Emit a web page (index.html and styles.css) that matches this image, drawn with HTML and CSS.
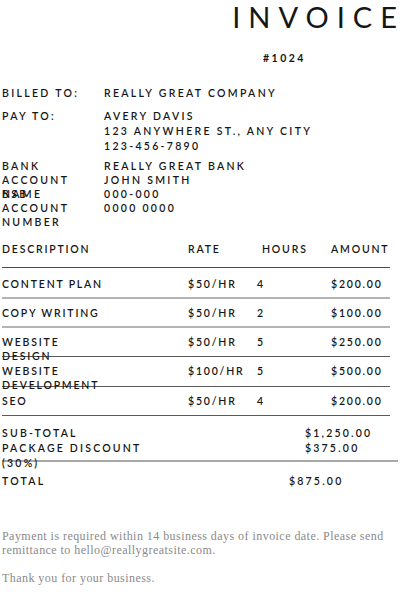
FILE: index.html
```html
<!DOCTYPE html>
<html>
<head>
<meta charset="utf-8">
<link rel="stylesheet" href="styles.css">
</head>
<body>
<div class="page">
  <header class="head">
    <h1 class="title">INVOIC<span class="tail">E</span></h1>
    <div class="number">#1024</div>
  </header>

  <section class="info">
    <div class="row bill">
      <div class="label">BILLED TO:</div>
      <div class="val">REALLY GREAT COMPANY</div>
    </div>
    <div class="row pay">
      <div class="label">PAY TO:</div>
      <div class="val">AVERY DAVIS<br>123 ANYWHERE ST., ANY CITY<br>123-456-7890</div>
    </div>
    <div class="bank">
      <div class="row brow"><div class="label">BANK</div><div class="val">REALLY GREAT BANK</div></div>
      <div class="row brow"><div class="label">ACCOUNT NAME</div><div class="val">JOHN SMITH</div></div>
      <div class="row brow"><div class="label">BSB</div><div class="val">000-000</div></div>
      <div class="row brow"><div class="label">ACCOUNT NUMBER</div><div class="val">0000 0000</div></div>
    </div>
  </section>

  <section class="items">
    <div class="line head-row">
      <div class="c-desc">DESCRIPTION</div>
      <div class="c-rate">RATE</div>
      <div class="c-hours-head">HOURS</div>
      <div class="c-amt">AMOUNT</div>
    </div>
    <div class="rows">
      <div class="line item soft">
        <div class="c-desc"><span class="desc">CONTENT&nbsp;PLAN</span></div>
        <div class="c-rate">$50/HR</div>
        <div class="c-hours">4</div>
        <div class="c-amt">$200.00</div>
      </div>
      <div class="line item soft">
        <div class="c-desc"><span class="desc">COPY&nbsp;WRITING</span></div>
        <div class="c-rate">$50/HR</div>
        <div class="c-hours">2</div>
        <div class="c-amt">$100.00</div>
      </div>
      <div class="line item">
        <div class="c-desc"><span class="desc">WEBSITE DESIGN</span></div>
        <div class="c-rate">$50/HR</div>
        <div class="c-hours">5</div>
        <div class="c-amt">$250.00</div>
      </div>
      <div class="line item">
        <div class="c-desc"><span class="desc">WEBSITE DEVELOPMENT</span></div>
        <div class="c-rate">$100/HR</div>
        <div class="c-hours">5</div>
        <div class="c-amt">$500.00</div>
      </div>
      <div class="line item">
        <div class="c-desc"><span class="desc">SEO</span></div>
        <div class="c-rate">$50/HR</div>
        <div class="c-hours">4</div>
        <div class="c-amt">$200.00</div>
      </div>
    </div>
  </section>

  <section class="totals">
    <div class="trow"><div class="tlabel">SUB-TOTAL</div><div class="tval">$1,250.00</div></div>
    <div class="trow"><div class="tlabel">PACKAGE DISCOUNT (30%)</div><div class="tval">$375.00</div></div>
  </section>
  <div class="grand">
    <div class="tlabel">TOTAL</div><div class="tval">$875.00</div>
  </div>

  <footer class="foot">
    <p>Payment is required within 14 business days of invoice date. Please send remittance to hello@reallygreatsite.com.</p>
    <p>Thank you for your business.</p>
  </footer>
</div>
</body>
</html>
```
FILE: styles.css
```css
* { box-sizing: border-box; }
html, body { margin: 0; padding: 0; background: #fff; }
body {
  font-family: "Lato", "DejaVu Sans", sans-serif;
  font-weight: 600;
  color: #161616;
  width: 400px;
  height: 609px;
  overflow: hidden;
}
.page { padding: 0 2px; }

.head { display: flex; flex-direction: column; }
.title {
  margin: 0;
  font-size: 29px;
  line-height: 34px;
  font-weight: 400;
  letter-spacing: 8px;
  text-align: right;
  padding-right: 1px;
}
.title .tail { letter-spacing: 0; }
.number {
  margin-top: 18px;
  line-height: 12px;
  font-size: 10.5px;
  font-weight: 700;
  letter-spacing: 2.5px;
  padding-left: 261px;
}

.info {
  margin-top: 22px;
  font-size: 10.5px;
  letter-spacing: 2.3px;
}
.row { display: grid; grid-template-columns: 102px 1fr; }
.bill { line-height: 15px; }
.pay { line-height: 15px; margin-top: 8px; }
.bank { margin-top: 4.5px; }
.brow { height: 14px; line-height: 14px; }
.brow .label { padding-right: 12px; }

.items { margin-top: 27px; font-size: 10.5px; letter-spacing: 1.8px; }
.line {
  display: grid;
  grid-template-columns: 186px 67px 76px 1fr;
  line-height: 14px;
}
.head-row {
  padding-bottom: 11px;
  border-bottom: 1px solid #4a4a4a;
  width: 388px;
}
.c-hours { padding-left: 2px; }
.c-hours-head { padding-left: 7px; }
.rows { padding-top: 2px; }
.item {
  height: 29.3px;
  padding-top: 7px;
  border-bottom: 1px solid #5a5a5a;
  width: 388px;
}
.item.soft { border-bottom: 2px solid #b4b4b4; }
.desc { display: inline-block; max-width: 92px; }

.totals { margin-top: 10px; font-size: 10.5px; letter-spacing: 2.2px; }
.trow {
  display: grid;
  grid-template-columns: 303px 1fr;
  height: 15px;
  line-height: 15px;
}
.trow .tlabel { max-width: 150px; }
.grand {
  margin-top: 4.5px;
  border-top: 2px solid #a8a8a8;
  width: 396px;
  padding-top: 11.5px;
  display: grid;
  grid-template-columns: 287px 1fr;
  line-height: 15px;
  font-size: 10.5px;
  letter-spacing: 2.2px;
}

.foot {
  margin-top: 40px;
  font-family: "Liberation Serif", "DejaVu Serif", serif;
  font-weight: 400;
  font-size: 12px;
  line-height: 14px;
  color: #8a8a8a;
  letter-spacing: 0.45px;
}
.foot p { margin: 0 0 14px; }
```
